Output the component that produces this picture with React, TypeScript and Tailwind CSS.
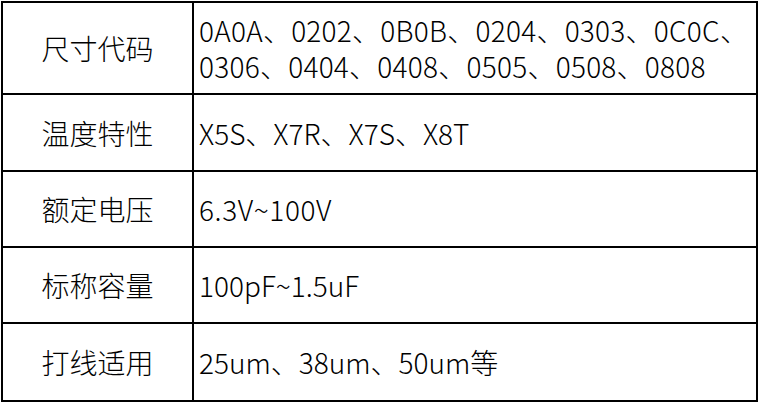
const rows: { label: string; lines: string[]; h: string; track?: string }[] = [
  {
    label: "尺寸代码",
    lines: ["0A0A、0202、0B0B、0204、0303、0C0C、", "0306、0404、0408、0505、0508、0808"],
    h: "h-[90px]",
    track: "tracking-[0.25px]",
  },
  { label: "温度特性", lines: ["X5S、X7R、X7S、X8T"], h: "h-[77px]" },
  { label: "额定电压", lines: ["6.3V~100V"], h: "h-[76px]", track: "tracking-[0.6px]" },
  { label: "标称容量", lines: ["100pF~1.5uF"], h: "h-[76px]" },
  { label: "打线适用", lines: ["25um、38um、50um等"], h: "h-[78px]" },
];

export default function App() {
  return (
    <div className="w-[760px] h-[404px] bg-white pl-px pt-px font-['Noto_Sans_CJK_SC',sans-serif] font-light text-[28px] text-black">
      <div className="w-[757px] border-2 border-black">
        {rows.map((row, i) => (
          <div key={row.label} className={`flex ${row.h} ${i > 0 ? "border-t-2 border-black" : ""}`}>
            <div className="w-[191px] shrink-0 flex items-center justify-center border-r-2 border-black leading-9">
              {row.label}
            </div>
            <div className={`flex-1 flex flex-col justify-center pl-[5px] leading-9 whitespace-nowrap ${row.track ?? ""}`}>
              {row.lines.map((l) => (
                <div key={l}>{l}</div>
              ))}
            </div>
          </div>
        ))}
      </div>
    </div>
  );
}
